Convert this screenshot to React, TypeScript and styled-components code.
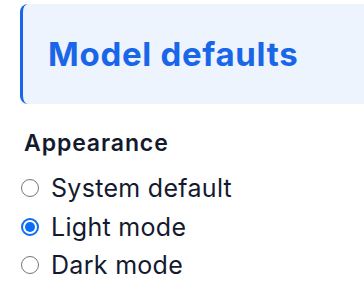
import React, { useState } from 'react';
import styled, { createGlobalStyle } from 'styled-components';

const GlobalStyle = createGlobalStyle`
  body {
    margin: 0;
    background: #ffffff;
    font-family: Inter, "Noto Sans", sans-serif;
  }
`;

const Page = styled.div`
  width: 100%;
  padding: 4px 0 0 20px;
  box-sizing: border-box;
  overflow: hidden;
`;

const Banner = styled.div`
  height: 100px;
  margin-right: -20px;
  display: flex;
  align-items: center;
  padding-left: 25px;
  background: #eef4fe;
  border-left: 3px solid #1a66e8;
  border-radius: 8px 0 0 8px;
`;

const Title = styled.h1`
  margin: 0;
  font-size: 33px;
  font-weight: 700;
  letter-spacing: 0.7px;
  color: #1a66e8;
`;

const Section = styled.div`
  padding: 25px 0 0 4px;
`;

const Heading = styled.div`
  font-size: 23px;
  font-weight: 600;
  letter-spacing: 0.9px;
  color: #141a2e;
  margin-bottom: 12px;
`;

const Option = styled.label`
  display: flex;
  align-items: center;
  gap: 12px;
  height: 38.5px;
  margin-left: -3px;
  font-size: 25px;
  letter-spacing: 0.3px;
  color: #141a2e;
  cursor: pointer;
`;

const Radio = styled.span<{ $checked: boolean }>`
  width: 18px;
  height: 18px;
  box-sizing: border-box;
  border-radius: 50%;
  border: ${(p) => (p.$checked ? '2px solid #0b6cf5' : '1.5px solid #767676')};
  display: flex;
  align-items: center;
  justify-content: center;
  &::after {
    content: '';
    display: ${(p) => (p.$checked ? 'block' : 'none')};
    width: 10px;
    height: 10px;
    border-radius: 50%;
    background: #0b6cf5;
  }
`;

const options = ['System default', 'Light mode', 'Dark mode'];

export default function App() {
  const [mode, setMode] = useState('Light mode');
  return (
    <Page>
      <GlobalStyle />
      <Banner>
        <Title>Model defaults</Title>
      </Banner>
      <Section>
        <Heading>Appearance</Heading>
        {options.map((o) => (
          <Option key={o} onClick={() => setMode(o)}>
            <Radio $checked={mode === o} />
            {o}
          </Option>
        ))}
      </Section>
    </Page>
  );
}
